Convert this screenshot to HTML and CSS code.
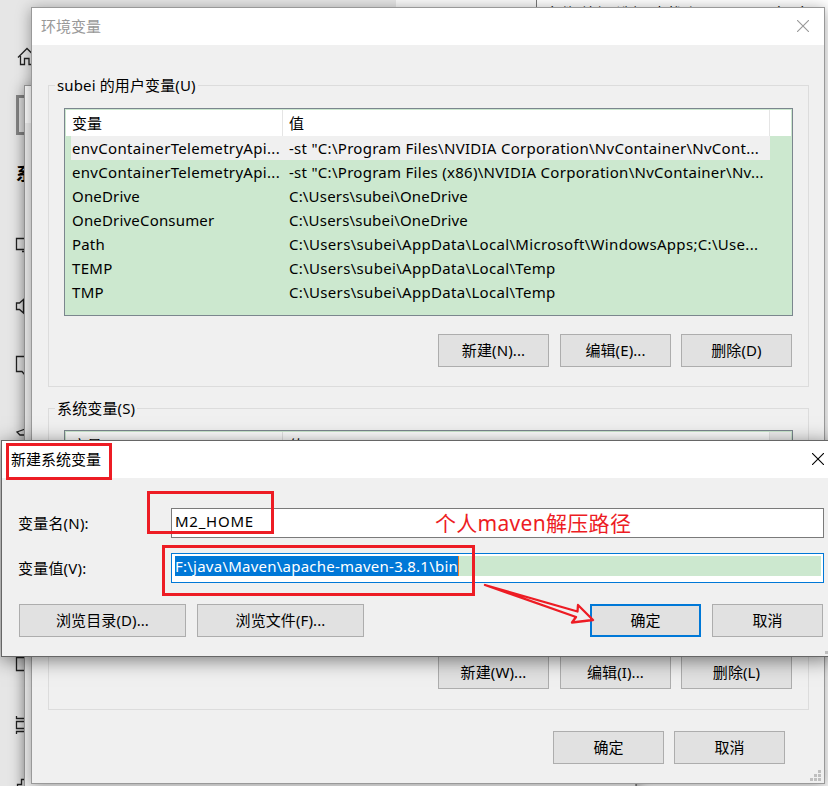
FILE: index.html
```html
<!DOCTYPE html>
<html lang="zh-CN">
<head>
<meta charset="utf-8">
<title>环境变量</title>
<link rel="stylesheet" href="styles.css">
</head>
<body>
<div class="desktop">
  <div class="settings">
    <svg class="nav-icons" width="32" height="786" viewBox="0 0 32 786" fill="none" stroke="#222" stroke-width="1.3">
      <path d="M18 57.5L27 48.5L36 57.5M20.500 56V64.500H24.500V58.500H29V64.500H33"/>
      <path d="M26 96.500H17.500V133.500H26" stroke="#868686" stroke-width="3"/>
      <path d="M30 238.500H16.500V249.500H30M22 251.500H30"/>
      <path d="M16.500 303V309.500H19.500L23.500 313V299.500L19.500 303Z"/>
      <path d="M30 356.500H16.500V371.500H22L25 375"/>
      <path d="M28 428L17 432L20 435H26"/>
      <path d="M30 657.500H16.500V670.500H30"/>
      <path d="M16.500 716V718.500H30M16.500 734V731.500H30M30 721.500H16.500V728.500H30"/>
      <path d="M30 779.500H21.500V784.500H17.500V790"/>
    </svg>
    <span class="nav-heading">系</span>
  </div>
  <div class="page-strip"></div>
  <div class="editor-strip">文件 编辑 选择 查找 视图 工具 运行 窗口 设置</div>
  <div class="lower-strip"></div>
  <div class="sheet"><div class="sheet-head"></div></div>

  <section class="window env">
    <header class="titlebar">
      <span>环境变量</span>
      <svg width="12" height="12" viewBox="0 0 12 12" stroke="#999" stroke-width="1.1"><path d="M0 0L12 12M12 0L0 12"/></svg>
    </header>
    <div class="env-body">
      <fieldset class="group">
        <legend>subei 的用户变量(U)</legend>
        <div class="list">
          <div class="row head"><span class="name">变量</span><span class="value">值</span></div>
          <div class="row selected"><span class="name">envContainerTelemetryApi...</span><span class="value long">-st "C:\Program Files\NVIDIA Corporation\NvContainer\NvCont...</span></div>
          <div class="row"><span class="name">envContainerTelemetryApi...</span><span class="value long">-st "C:\Program Files (x86)\NVIDIA Corporation\NvContainer\Nv...</span></div>
          <div class="row"><span class="name short">OneDrive</span><span class="value short">C:\Users\subei\OneDrive</span></div>
          <div class="row"><span class="name short">OneDriveConsumer</span><span class="value short">C:\Users\subei\OneDrive</span></div>
          <div class="row"><span class="name short">Path</span><span class="value">C:\Users\subei\AppData\Local\Microsoft\WindowsApps;C:\Use...</span></div>
          <div class="row"><span class="name">TEMP</span><span class="value">C:\Users\subei\AppData\Local\Temp</span></div>
          <div class="row"><span class="name">TMP</span><span class="value">C:\Users\subei\AppData\Local\Temp</span></div>
        </div>
        <div class="actions"><button>新建(N)...</button><button>编辑(E)...</button><button>删除(D)</button></div>
      </fieldset>
      <fieldset class="group system">
        <legend>系统变量(S)</legend>
        <div class="list">
          <div class="row head"><span class="name">变量</span><span class="value">值</span><span class="scroll"></span></div>
        </div>
        <div class="actions"><button>新建(W)...</button><button>编辑(I)...</button><button>删除(L)</button></div>
      </fieldset>
      <div class="footer"><button>确定</button><button>取消</button></div>
    </div>
    <svg class="grip" width="11" height="11" viewBox="0 0 11 11" fill="#bfbfbf"><path d="M8 0h3v3h-3zM4 4h3v3h-3zM8 4h3v3h-3zM0 8h3v3h-3zM4 8h3v3h-3zM8 8h3v3h-3z"/></svg>
  </section>

  <section class="window dialog">
    <header class="titlebar">
      <span>新建系统变量</span>
      <svg width="12" height="12" viewBox="0 0 12 12" stroke="#000" stroke-width="1.1"><path d="M0 0L12 12M12 0L0 12"/></svg>
    </header>
    <div class="form">
      <label>变量名(N):</label><div class="input"><span>M2_HOME</span></div>
      <label>变量值(V):</label><div class="input focus"><div class="fill"><span class="selection">F:\java\Maven\apache-maven-3.8.1\bin</span></div></div>
    </div>
    <div class="dialog-actions">
      <button class="wide">浏览目录(D)...</button><button class="wide">浏览文件(F)...</button><button class="default">确定</button><button>取消</button>
    </div>
    <svg class="grip" width="11" height="11" viewBox="0 0 11 11" fill="#bfbfbf"><path d="M8 0h3v3h-3zM4 4h3v3h-3zM8 4h3v3h-3zM0 8h3v3h-3z"/></svg>
  </section>

  <div class="mark mark-title"></div>
  <div class="mark mark-name"></div>
  <div class="mark mark-value"></div>
  <span class="note">个人maven解压路径</span>
  <svg class="arrow" width="120" height="50" viewBox="480 580 120 50" fill="none" stroke="#ed1c24" stroke-width="2.300" stroke-linejoin="round"><path d="M485 585L577.500 611.500L578 605L593 620L572 622.500L576 617Z"/></svg>
</div>
</body>
</html>
```
FILE: styles.css
```css
* { box-sizing: border-box; }
body { margin: 0; font: 15px/24px "Noto Sans", "Noto Sans CJK SC", sans-serif; color: #000; }
.desktop { position: relative; width: 828px; height: 786px; overflow: hidden; background: #e6e6e6; white-space: nowrap; }
.settings, .nav-icons { position: absolute; left: 0; top: 0; }
.nav-heading { position: absolute; left: 16px; top: 162px; font-weight: 700; font-size: 17px; }
.page-strip { position: absolute; left: 396px; top: 0; width: 141px; height: 20px; background: #fafafa; border-right: 1px solid #777; }
.editor-strip { position: absolute; left: 537px; top: 0; width: 291px; height: 786px; padding: 1px 0 0 8px; background: #fff; overflow: hidden; font-size: 15px; letter-spacing: 0.6px; }
.lower-strip { position: absolute; left: 636px; top: 770px; width: 192px; height: 16px; background: #f8f8f8; border-left: 1px solid #999; }
.sheet { position: absolute; left: 24px; top: 85px; width: 612px; height: 720px; border: 1px solid #999; background: #f0f0f0; box-shadow: 0 2px 14px rgba(0,0,0,.4); }
.sheet-head { height: 37px; background: #fff; }
.window { position: absolute; display: flex; flex-direction: column; background: #f0f0f0; }
.env { left: 31px; top: 7px; width: 794px; height: 777px; border: 1px solid #999; box-shadow: 0 2px 14px rgba(0,0,0,.36); }
.dialog { left: 1px; top: 440px; width: 832px; height: 217px; border: 1px solid #666; box-shadow: 0 3px 18px rgba(0,0,0,.5); }
.titlebar { display: flex; flex: none; justify-content: space-between; align-items: center; height: 37px; padding: 0 15px 2px 9px; background: #fff; }
.env .titlebar { color: #999; }
.dialog .titlebar { padding-right: 8px; }
.env-body { display: flex; flex-direction: column; padding: 40px 16px 0; }
.group { position: relative; min-width: 0; width: 761px; height: 302px; margin: 0; padding: 22px 16px 0 15px; border: 1px solid #dcdcdc; }
.group.system { margin-top: 21px; padding-top: 21px; }
legend { float: left; height: 24px; margin: -36px 0 0 -9px; padding: 0 2px; background: #f0f0f0; line-height: 26px; letter-spacing: 0.13px; }
.system legend { line-height: 28px; }
.list { clear: both; width: 729px; height: 208px; padding: 1px; border: 1px solid #7b868e; background: #cce8cf; }
.row { display: flex; height: 24px; line-height: 24px; letter-spacing: 0.32px; }
.row span { flex: none; overflow: hidden; }
.row .long { letter-spacing: 0.28px; }
.row .short { letter-spacing: 0.18px; }
.name { width: 217px; padding-left: 6px; }
.value { width: 487px; padding-left: 6px; }
.head { height: 26px; line-height: 26px; letter-spacing: 0; background: #fff; }
.head .name, .head .value { border-right: 1px solid #e5e5e5; }
.selected { width: 699px; margin-left: 5px; background: #f0f0f0; }
.selected .name { width: 212px; padding-left: 1px; }
.scroll { width: 21px; background: #f0f0f0; }
.actions, .footer { display: flex; justify-content: flex-end; gap: 10px; }
.actions { margin-top: 18px; }
.footer { margin: 21px 23px 0 0; }
button { width: 111px; height: 33px; padding: 0 0 2px 0; border: 1px solid #adadad; background: #e1e1e1; font: inherit; letter-spacing: 0.1px; color: #000; }
.actions button:first-child { margin-right: 1px; }
.grip { position: absolute; right: 3px; bottom: 2px; }
.dialog .grip { right: -4px; bottom: 2px; }
.form { display: grid; grid-template-columns: 153px 653px; row-gap: 15px; align-items: center; padding: 30px 0 0 16px; letter-spacing: 0.2px; }
.input { display: flex; height: 30px; padding: 0 3px; border: 1px solid #7a7a7a; background: #fff; letter-spacing: 0.75px; }
.input.focus { padding: 2px 2px 6px 3px; border-color: #0078d7; letter-spacing: 0.24px; }
.fill { flex: 1; height: 20px; background: #cce8cf; }
.selection { display: block; width: 284px; height: 20px; line-height: 20px; background: #0078d7; color: #fff; border-right: 1px solid #f07820; }
.dialog-actions { display: flex; margin: 21px 0 0 17px; gap: 11px; }
.wide { width: 167px; }
.default { margin-left: 215px; border: 2px solid #0078d7; }
.mark { position: absolute; border: 3px solid #ed1c24; }
.mark-title { left: 6px; top: 443px; width: 106px; height: 37px; }
.mark-name { left: 147px; top: 491px; width: 127px; height: 43px; }
.mark-value { left: 162px; top: 545px; width: 313px; height: 51px; }
.note { position: absolute; left: 435px; top: 511px; font-size: 21px; letter-spacing: 0.3px; color: #ed1c24; }
.arrow { position: absolute; left: 480px; top: 580px; }
```
